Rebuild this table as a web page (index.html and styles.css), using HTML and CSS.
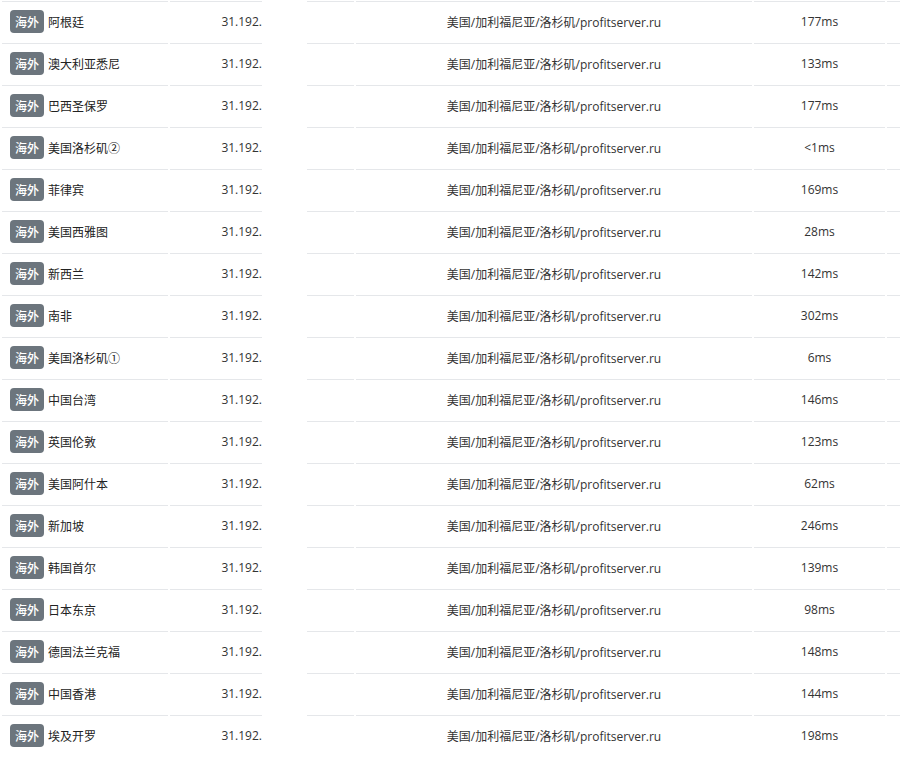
FILE: index.html
```html
<!DOCTYPE html>
<html lang="zh-CN">
<head>
<meta charset="utf-8">
<title>测速结果</title>
<link rel="stylesheet" href="styles.css">
</head>
<body>
<div class="list">
  <div class="row"><div class="cell c-name"><span class="badge">海外</span><span class="name">阿根廷</span></div><div class="cell c-ip">31.192.</div><div class="cell c-ghost"></div><div class="cell c-blank"></div><div class="cell c-loc">美国/加利福尼亚/洛杉矶/profitserver.ru</div><div class="cell c-ms">177ms</div><div class="cell c-rest"></div></div>
  <div class="row"><div class="cell c-name"><span class="badge">海外</span><span class="name">澳大利亚悉尼</span></div><div class="cell c-ip">31.192.</div><div class="cell c-ghost"></div><div class="cell c-blank"></div><div class="cell c-loc">美国/加利福尼亚/洛杉矶/profitserver.ru</div><div class="cell c-ms">133ms</div><div class="cell c-rest"></div></div>
  <div class="row"><div class="cell c-name"><span class="badge">海外</span><span class="name">巴西圣保罗</span></div><div class="cell c-ip">31.192.</div><div class="cell c-ghost"></div><div class="cell c-blank"></div><div class="cell c-loc">美国/加利福尼亚/洛杉矶/profitserver.ru</div><div class="cell c-ms">177ms</div><div class="cell c-rest"></div></div>
  <div class="row"><div class="cell c-name"><span class="badge">海外</span><span class="name">美国洛杉矶②</span></div><div class="cell c-ip">31.192.</div><div class="cell c-ghost"></div><div class="cell c-blank"></div><div class="cell c-loc">美国/加利福尼亚/洛杉矶/profitserver.ru</div><div class="cell c-ms">&lt;1ms</div><div class="cell c-rest"></div></div>
  <div class="row"><div class="cell c-name"><span class="badge">海外</span><span class="name">菲律宾</span></div><div class="cell c-ip">31.192.</div><div class="cell c-ghost"></div><div class="cell c-blank"></div><div class="cell c-loc">美国/加利福尼亚/洛杉矶/profitserver.ru</div><div class="cell c-ms">169ms</div><div class="cell c-rest"></div></div>
  <div class="row"><div class="cell c-name"><span class="badge">海外</span><span class="name">美国西雅图</span></div><div class="cell c-ip">31.192.</div><div class="cell c-ghost"></div><div class="cell c-blank"></div><div class="cell c-loc">美国/加利福尼亚/洛杉矶/profitserver.ru</div><div class="cell c-ms">28ms</div><div class="cell c-rest"></div></div>
  <div class="row"><div class="cell c-name"><span class="badge">海外</span><span class="name">新西兰</span></div><div class="cell c-ip">31.192.</div><div class="cell c-ghost"></div><div class="cell c-blank"></div><div class="cell c-loc">美国/加利福尼亚/洛杉矶/profitserver.ru</div><div class="cell c-ms">142ms</div><div class="cell c-rest"></div></div>
  <div class="row"><div class="cell c-name"><span class="badge">海外</span><span class="name">南非</span></div><div class="cell c-ip">31.192.</div><div class="cell c-ghost"></div><div class="cell c-blank"></div><div class="cell c-loc">美国/加利福尼亚/洛杉矶/profitserver.ru</div><div class="cell c-ms">302ms</div><div class="cell c-rest"></div></div>
  <div class="row"><div class="cell c-name"><span class="badge">海外</span><span class="name">美国洛杉矶①</span></div><div class="cell c-ip">31.192.</div><div class="cell c-ghost"></div><div class="cell c-blank"></div><div class="cell c-loc">美国/加利福尼亚/洛杉矶/profitserver.ru</div><div class="cell c-ms">6ms</div><div class="cell c-rest"></div></div>
  <div class="row"><div class="cell c-name"><span class="badge">海外</span><span class="name">中国台湾</span></div><div class="cell c-ip">31.192.</div><div class="cell c-ghost"></div><div class="cell c-blank"></div><div class="cell c-loc">美国/加利福尼亚/洛杉矶/profitserver.ru</div><div class="cell c-ms">146ms</div><div class="cell c-rest"></div></div>
  <div class="row"><div class="cell c-name"><span class="badge">海外</span><span class="name">英国伦敦</span></div><div class="cell c-ip">31.192.</div><div class="cell c-ghost"></div><div class="cell c-blank"></div><div class="cell c-loc">美国/加利福尼亚/洛杉矶/profitserver.ru</div><div class="cell c-ms">123ms</div><div class="cell c-rest"></div></div>
  <div class="row"><div class="cell c-name"><span class="badge">海外</span><span class="name">美国阿什本</span></div><div class="cell c-ip">31.192.</div><div class="cell c-ghost"></div><div class="cell c-blank"></div><div class="cell c-loc">美国/加利福尼亚/洛杉矶/profitserver.ru</div><div class="cell c-ms">62ms</div><div class="cell c-rest"></div></div>
  <div class="row"><div class="cell c-name"><span class="badge">海外</span><span class="name">新加坡</span></div><div class="cell c-ip">31.192.</div><div class="cell c-ghost"></div><div class="cell c-blank"></div><div class="cell c-loc">美国/加利福尼亚/洛杉矶/profitserver.ru</div><div class="cell c-ms">246ms</div><div class="cell c-rest"></div></div>
  <div class="row"><div class="cell c-name"><span class="badge">海外</span><span class="name">韩国首尔</span></div><div class="cell c-ip">31.192.</div><div class="cell c-ghost"></div><div class="cell c-blank"></div><div class="cell c-loc">美国/加利福尼亚/洛杉矶/profitserver.ru</div><div class="cell c-ms">139ms</div><div class="cell c-rest"></div></div>
  <div class="row"><div class="cell c-name"><span class="badge">海外</span><span class="name">日本东京</span></div><div class="cell c-ip">31.192.</div><div class="cell c-ghost"></div><div class="cell c-blank"></div><div class="cell c-loc">美国/加利福尼亚/洛杉矶/profitserver.ru</div><div class="cell c-ms">98ms</div><div class="cell c-rest"></div></div>
  <div class="row"><div class="cell c-name"><span class="badge">海外</span><span class="name">德国法兰克福</span></div><div class="cell c-ip">31.192.</div><div class="cell c-ghost"></div><div class="cell c-blank"></div><div class="cell c-loc">美国/加利福尼亚/洛杉矶/profitserver.ru</div><div class="cell c-ms">148ms</div><div class="cell c-rest"></div></div>
  <div class="row"><div class="cell c-name"><span class="badge">海外</span><span class="name">中国香港</span></div><div class="cell c-ip">31.192.</div><div class="cell c-ghost"></div><div class="cell c-blank"></div><div class="cell c-loc">美国/加利福尼亚/洛杉矶/profitserver.ru</div><div class="cell c-ms">144ms</div><div class="cell c-rest"></div></div>
  <div class="row"><div class="cell c-name"><span class="badge">海外</span><span class="name">埃及开罗</span></div><div class="cell c-ip">31.192.</div><div class="cell c-ghost"></div><div class="cell c-blank"></div><div class="cell c-loc">美国/加利福尼亚/洛杉矶/profitserver.ru</div><div class="cell c-ms">198ms</div><div class="cell c-rest"></div></div>
</div>
</body>
</html>
```

FILE: styles.css
```css
html, body {
  margin: 0;
  padding: 0;
  background: #ffffff;
  overflow: hidden;
}

body {
  width: 900px;
  height: 757px;
  font-family: "Open Sans", "Noto Sans CJK SC", sans-serif;
  font-size: 12px;
  color: #333333;
}

.list {
  display: flex;
  flex-direction: column;
  padding-top: 1px;
  padding-left: 2px;
}

.row {
  display: flex;
  gap: 2px;
  height: 42px;
  flex-wrap: nowrap;
}

.cell {
  flex: none;
  border-top: 1px solid #e5e7ea;
  display: flex;
  align-items: center;
  white-space: nowrap;
  box-sizing: border-box;
  padding-bottom: 2px;
}

.c-name {
  width: 166px;
  padding-left: 8px;
  gap: 4px;
}

.c-ip {
  width: 92px;
  justify-content: flex-end;
}

.c-ghost {
  width: 41px;
  border-top-color: transparent;
}

.c-blank {
  width: 47px;
}

.c-loc {
  width: 396px;
  justify-content: center;
}

.c-ms {
  width: 131px;
  justify-content: center;
}

.c-rest {
  width: 13px;
}

.badge {
  display: inline-flex;
  align-items: center;
  justify-content: center;
  width: 34px;
  height: 23px;
  border-radius: 4px;
  background: #6c757d;
  color: #ffffff;
  font-family: "Noto Sans CJK SC", sans-serif;
  font-size: 12px;
  font-weight: 500;
}

.name {
  font-family: "Noto Sans CJK SC", sans-serif;
  color: #222222;
}
```
